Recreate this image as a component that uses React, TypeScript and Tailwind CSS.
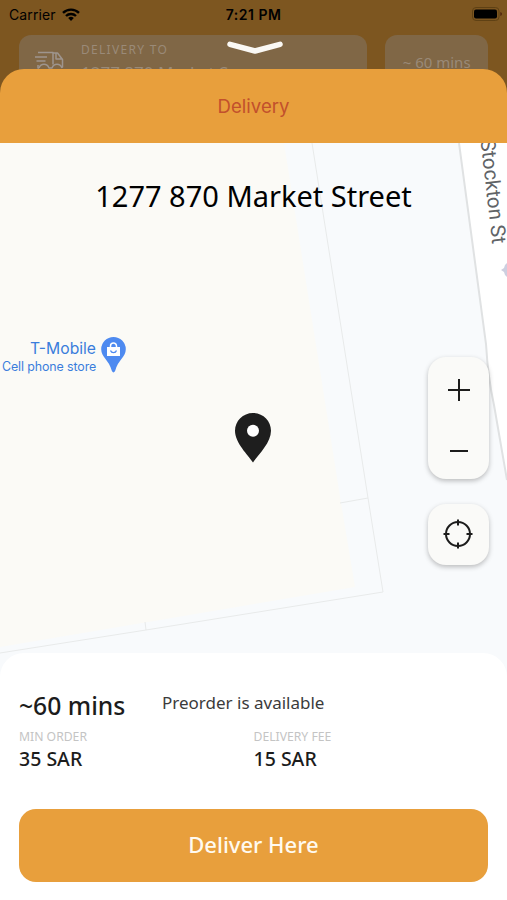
import type { ReactNode } from 'react';

interface StatProps {
  label: string;
  value: string;
}

const Stat = ({ label, value }: StatProps) => (
  <div className="w-[234.5px]">
    <p className="text-[12.2px] leading-4 text-[#c4c4c4]">{label}</p>
    <p className="mt-[2px] text-[19.5px] leading-6 font-medium text-[#1c1c1c]">{value}</p>
  </div>
);

const MapButton = ({ label, children }: { label: string; children: ReactNode }) => (
  <button aria-label={label} className="flex h-[61px] w-[61px] items-center justify-center text-[#1c1c1c]">
    {children}
  </button>
);

function StatusBar() {
  return (
    <div className="grid h-7 grid-cols-3 items-center px-[9px] text-[14px] text-black">
      <div className="flex items-center gap-1.5">
        <span className="tracking-[0.1px]">Carrier</span>
        <svg width="18" height="13" viewBox="0 0 18 13" fill="none" stroke="currentColor" strokeWidth="2.4">
          <path d="M1 4.9a11.4 11.4 0 0 1 16 0" />
          <path d="M4 8a7.2 7.2 0 0 1 10 0" />
          <path d="M9 13 6.2 10.1a4 4 0 0 1 5.6 0z" fill="currentColor" stroke="none" />
        </svg>
      </div>
      <span className="text-center font-semibold tracking-[0.5px] whitespace-nowrap">7:21 PM</span>
      <svg className="ml-auto -mr-[5px]" width="31" height="14" viewBox="0 0 31 14">
        <rect x="0.5" y="0.5" width="26.5" height="13" rx="3.5" fill="none" stroke="#5f4114" />
        <rect x="2" y="2.5" width="23" height="9" rx="2" fill="#000" />
        <path d="M28.3 5v4q1.7-.5 1.7-2t-1.7-2" fill="#4f250f" />
      </svg>
    </div>
  );
}

function Backdrop() {
  return (
    <header className="relative h-[110px] overflow-hidden bg-[#7d5620] font-['Inter',sans-serif]">
      <StatusBar />
      <div className="mt-[7px] flex gap-[18px] px-[19px] font-['Noto_Sans',sans-serif] text-[#9a8a78]">
        <div className="flex h-[60px] w-[349px] rounded-xl bg-[#806746] pl-4">
          <svg className="mt-4 text-[#9e958e]" width="30" height="24" viewBox="0 0 30 24" fill="none" stroke="currentColor" strokeWidth="1.5" strokeLinejoin="round">
            <path d="M3 1.5h15v12M0 6h12M1.5 10h9M3 14v3h1M18 2h4.5l5 6.5v7.5h-1M21 2v6h6" />
            <path d="M4 17c2-5 8-5 10 0h3c2-5 8-5 10 0" />
          </svg>
          <div className="ml-4 mt-[7px]">
            <p className="text-[12px] leading-4 tracking-[1.3px]">DELIVERY TO</p>
            <p className="mt-[3px] text-[17px] leading-6">1277 870 Market S</p>
          </div>
        </div>
        <div className="h-[60px] w-[103px] rounded-xl bg-[#806746] pt-[17px] text-center text-[15px] leading-5">
          ~ 60 mins
        </div>
      </div>
      <svg className="absolute left-[226px] top-[39px]" width="58" height="17" viewBox="0 0 58 17" fill="none">
        <path d="M4 5.3 29 12l25-6.7" stroke="#faf8f4" strokeWidth="5.5" strokeLinecap="round" strokeLinejoin="round" />
      </svg>
    </header>
  );
}

// One map tile, drawn in screen units with the origin at the top left of the map.
function MapTile() {
  return (
    <svg className="absolute inset-0" width="507" height="540" viewBox="0 0 507 540">
      <rect width="507" height="540" fill="#f8fafc" />
      <path d="M0 0H284L341 360 355 444 0 504Z" fill="#fbfaf6" />
      <path d="M312 0 368 355 383 449 146 487 0 510M340 360l28-5M145 479l1 8" fill="none" stroke="#e8eaea" />
      <path d="M459 0 486 201Q488 235 494 262L507 337V0Z" fill="#fff" />
      <path d="M459 0 486 201Q488 235 494 262L507 337" fill="none" stroke="#e0e2e3" strokeWidth="2" />
      <text transform="translate(480.5 -3) rotate(83.5)" fontFamily="Roboto, sans-serif" fontSize="20.5" fill="#606366">
        Stockton St
      </text>
      <path d="M507 120l-2 2-1 3-3 2 3 2 1 3 2 2z" fill="#cdcfe0" />
    </svg>
  );
}

function PlaceLabel() {
  return (
    <div className="absolute left-[2px] top-[194px] flex gap-[5px] font-['Inter',sans-serif] text-[#3a7ddc]">
      <div className="w-[94px] text-right whitespace-nowrap">
        <p className="text-[15.7px] leading-6">T-Mobile</p>
        <p className="text-[12.4px] leading-[12px] tracking-[-0.1px]">Cell phone store</p>
      </div>
      <svg width="25" height="36" viewBox="0 0 25 36">
        <path d="M12.5 0A12.3 12.3 0 0 0 .2 12.3c0 8 8 11 10.6 21.500q1.700 3.200 3.400 0C16.800 23.300 24.800 20.300 24.800 12.300A12.300 12.300 0 0 0 12.500 0Z" fill="#4e8af0" />
        <path d="M6 10h13v9H6z" fill="#fff" />
        <path d="M9.5 11V9a3 3 0 0 1 6 0v2" fill="none" stroke="#fff" strokeWidth="1.5" />
        <path d="M9.5 13.5a3.2 3.2 0 0 0 6 0" fill="none" stroke="#4e8af0" strokeWidth="1.3" />
      </svg>
    </div>
  );
}

function MapView() {
  return (
    <section className="relative h-[510px]">
      <MapTile />
      <h1 className="relative pt-[33px] text-center text-[29px] leading-10 text-black">1277 870 Market Street</h1>
      <PlaceLabel />

      <svg className="absolute left-[235px] top-[270px]" width="36" height="50" viewBox="0 0 36 50">
        <path
          d="M18 0C8 0 0 8 0 17.8 0 30 13 42 18 49.5 23 42 36 30 36 17.8 36 8 28 0 18 0Z"
          fill="#1e1e1e"
        />
        <circle cx="18" cy="17.8" r="6" fill="#fff" />
      </svg>

      <div className="absolute right-[18px] top-[214px] flex flex-col gap-[25px]">
        <div className="rounded-[18px] bg-[#fafaf8] shadow-[0_2px_5px_rgba(0,0,0,0.25)]">
          <MapButton label="Zoom in">
            <svg className="mt-1 ml-px" width="22" height="22" viewBox="0 0 22 22" stroke="currentColor" strokeWidth="2">
              <path d="M0 11h22M11 0v22" />
            </svg>
          </MapButton>
          <MapButton label="Zoom out">
            <svg className="mt-1 ml-px" width="18" height="4" viewBox="0 0 18 4" stroke="currentColor" strokeWidth="2">
              <path d="M0 2h18" />
            </svg>
          </MapButton>
        </div>
        <div className="rounded-[18px] bg-[#fafaf8] shadow-[0_2px_5px_rgba(0,0,0,0.25)]">
          <MapButton label="My location">
            <svg className="-mt-px mr-px" width="30" height="30" viewBox="0 0 30 30" fill="none" stroke="currentColor" strokeWidth="2">
              <circle cx="15" cy="15" r="12" />
              <path d="M15 .5v6M15 23.5v6M.5 15h6M23.5 15h6" />
            </svg>
          </MapButton>
        </div>
      </div>
    </section>
  );
}

function OrderPanel() {
  return (
    <section className="relative flex-1 rounded-t-[24px] bg-white px-[19px] pt-9">
      <div className="flex">
        <p className="w-[143px] text-[24.7px] leading-[34px] font-medium text-[#1c1c1c]">~60 mins</p>
        <p className="pt-[2px] text-[17px] leading-6 text-[#3b3b3b]">Preorder is available</p>
      </div>
      <div className="mt-[6px] flex">
        <Stat label="MIN ORDER" value="35 SAR" />
        <Stat label="DELIVERY FEE" value="15 SAR" />
      </div>
      <button className="mt-[38px] h-[73px] w-full rounded-[17px] bg-[#e89f3c] pb-[2px] text-[22px] font-medium text-[#fffaf0]">
        Deliver Here
      </button>
    </section>
  );
}

export default function App() {
  return (
    <div className="flex h-[900px] w-[507px] flex-col overflow-hidden bg-white font-['Noto_Sans',sans-serif]">
      <Backdrop />
      <main className="relative -mt-[41px] flex flex-1 flex-col">
        <div className="flex h-[74px] shrink-0 items-center justify-center rounded-t-[24px] bg-[#e89f3c] pt-[2px] font-['Inter',sans-serif] text-[18.6px] text-[#c2502c]">
          Delivery
        </div>
        <MapView />
        <OrderPanel />
      </main>
    </div>
  );
}
